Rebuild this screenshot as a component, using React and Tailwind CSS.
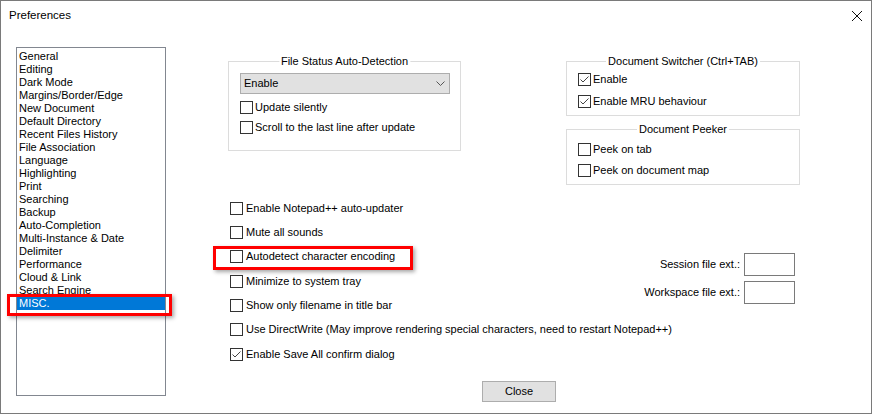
import React from 'react';

const pages = [
  'General', 'Editing', 'Dark Mode', 'Margins/Border/Edge', 'New Document',
  'Default Directory', 'Recent Files History', 'File Association', 'Language',
  'Highlighting', 'Print', 'Searching', 'Backup', 'Auto-Completion',
  'Multi-Instance & Date', 'Delimiter', 'Performance', 'Cloud & Link',
  'Search Engine', 'MISC.',
];

const miscOptions = [
  { label: 'Enable Notepad++ auto-updater', h: 'h-[24px]' },
  { label: 'Mute all sounds', h: 'h-[24px]' },
  { label: 'Autodetect character encoding', h: 'h-[25px]', marked: true },
  { label: 'Minimize to system tray', h: 'h-[24px]' },
  { label: 'Show only filename in title bar', h: 'h-[24px]' },
  { label: 'Use DirectWrite (May improve rendering special characters, need to restart Notepad++)', h: 'h-[25px]' },
  { label: 'Enable Save All confirm dialog', h: 'h-[24px]', checked: true },
];

function CheckBox({ checked }) {
  return (
    <span className="w-[13px] h-[13px] shrink-0 border border-[#333] bg-white flex items-center justify-center">
      {checked && (
        <svg width="11" height="11" viewBox="0 0 11 11">
          <path d="M1.5 5.5 L4 8 L9.5 2.5" fill="none" stroke="#444" strokeWidth="1" />
        </svg>
      )}
    </span>
  );
}

function Option({ label, checked, className = 'h-[20px]', gap = 'gap-[2px]' }) {
  return (
    <div className={`flex items-center ${gap} ${className}`}>
      <CheckBox checked={checked} />
      <span className="whitespace-nowrap">{label}</span>
    </div>
  );
}

function GroupBox({ title, className, children }) {
  return (
    <div className={`relative border border-[#dcdcdc] ${className}`}>
      <span className="absolute -top-[8px] left-1/2 -translate-x-1/2 bg-white px-[2px] leading-[14px] whitespace-nowrap">
        {title}
      </span>
      {children}
    </div>
  );
}

export default function App() {
  return (
    <div className="w-[872px] h-[414px] border border-[#7a7a7a] bg-white flex flex-col text-[11px] text-black font-['Liberation_Sans',Arial,sans-serif]">
      {/* title bar */}
      <div className="h-[30px] flex items-center justify-between pl-[8px] pr-[9px]">
        <span className="text-[11.5px]">Preferences</span>
        <svg width="10" height="10" viewBox="0 0 10 10">
          <path d="M0 0 L10 10 M10 0 L0 10" stroke="#111" strokeWidth="1" />
        </svg>
      </div>

      <div className="flex-1 flex">
        {/* page list */}
        <div className="pl-[15px] pt-[16px]">
          <div className="w-[150px] h-[349px] border border-[#828790] pt-[2px]">
            {pages.map((p, i) => {
              const selected = i === pages.length - 1;
              return (
                <div
                  key={p}
                  className={
                    selected
                      ? 'relative h-[13px] leading-[13px] pl-[2px] bg-[#0078d7] text-white'
                      : 'h-[13px] leading-[13px] pl-[2px]'
                  }
                >
                  {p}
                  {selected && (
                    <span className="absolute -left-[10px] -top-[3px] w-[165px] h-[22px] border-[3px] border-[#ff0000] shadow-[2px_2px_4px_rgba(0,0,0,0.35)]" />
                  )}
                </div>
              );
            })}
          </div>
        </div>

        {/* MISC. page */}
        <div className="flex-1 min-w-0 flex flex-col pt-[30px]">
          <div className="flex ml-[62px]">
            <GroupBox title="File Status Auto-Detection" className="w-[233px] h-[90px] pl-[11px] pt-[11px]">
              <div className="w-[210px] h-[21px] border border-[#adadad] bg-[#e1e1e1] flex items-center justify-between pl-[3px] pr-[4px]">
                <span>Enable</span>
                <svg width="9" height="5" viewBox="0 0 9 5">
                  <path d="M0.5 0.5 L4.5 4.5 L8.5 0.5" fill="none" stroke="#555" strokeWidth="1" />
                </svg>
              </div>
              <div className="mt-[3px]">
                <Option label="Update silently" />
                <Option label="Scroll to the last line after update" />
              </div>
            </GroupBox>

            <div className="ml-[105px] flex flex-col">
              <GroupBox title="Document Switcher (Ctrl+TAB)" className="w-[234px] h-[55px] pl-[11px] pt-[6px]">
                <Option label="Enable" checked className="h-[22px]" />
                <Option label="Enable MRU behaviour" checked className="h-[22px]" />
              </GroupBox>
              <GroupBox title="Document Peeker" className="w-[234px] h-[56px] mt-[13px] pl-[11px] pt-[9px]">
                <Option label="Peek on tab" className="h-[21px]" />
                <Option label="Peek on document map" className="h-[21px]" />
              </GroupBox>
            </div>
          </div>

          <div className="flex">
            <div className="ml-[64px] mt-[11px] w-[400px] shrink-0">
              {miscOptions.map(o => (
                <div key={o.label} className="relative">
                  <Option label={o.label} checked={o.checked} className={o.h} gap="gap-[3px]" />
                  {o.marked && (
                    <span className="absolute -left-[17px] top-[2px] w-[200px] h-[24px] border-[3px] border-[#ff0000] shadow-[2px_2px_4px_rgba(0,0,0,0.35)]" />
                  )}
                </div>
              ))}
            </div>

            <div className="ml-auto mr-[76px] mt-[68px] flex flex-col gap-[5px] shrink-0">
              <div className="flex items-center justify-end gap-[4px]">
                <span className="whitespace-nowrap">Session file ext.:</span>
                <span className="w-[51px] h-[23px] border border-[#7a7a7a] bg-white" />
              </div>
              <div className="flex items-center justify-end gap-[4px]">
                <span className="whitespace-nowrap">Workspace file ext.:</span>
                <span className="w-[51px] h-[23px] border border-[#7a7a7a] bg-white" />
              </div>
            </div>
          </div>

          <div className="ml-[316px] mt-[15px]">
            <button className="w-[74px] h-[21px] border border-[#adadad] bg-[#e1e1e1] flex items-center justify-center">
              Close
            </button>
          </div>
        </div>
      </div>
    </div>
  );
}
